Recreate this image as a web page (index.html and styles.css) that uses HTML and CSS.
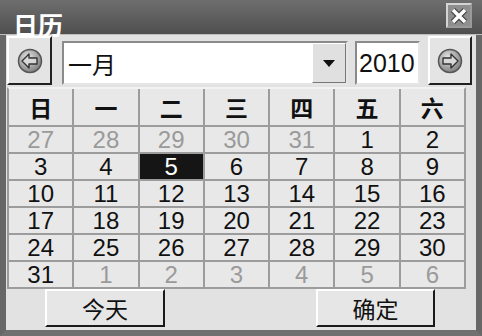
FILE: index.html
```html
<!DOCTYPE html>
<html lang="zh">

<head>
    <meta charset="UTF-8">
    <meta name="viewport" content="width=device-width, initial-scale=1.0">
    <title>日历</title>
    <link rel="stylesheet" href="styles.css">
</head>

<body>
    <div class="window">
        <div class="titlebar">
            <span class="title">日历</span>
            <button class="close">
                <svg width="18" height="18" viewBox="0 0 18 18">
                    <path d="M3 3 L15 15 M15 3 L3 15" stroke="#444" stroke-width="6" />
                    <path d="M3 3 L15 15 M15 3 L3 15" stroke="#fff" stroke-width="3.5" />
                </svg>
            </button>
        </div>

        <div class="toolbar">
            <button class="nav-btn">
                <svg width="26" height="26" viewBox="0 0 26 26">
                    <circle cx="13" cy="13" r="11.5" fill="url(#ball)" stroke="#555" stroke-width="1.5" />
                    <polygon points="5,13 12,6 12,10 20,10 20,16 12,16 12,20" fill="#d8d8d8" stroke="#333" stroke-width="1.4" stroke-linejoin="round" />
                    <defs>
                        <radialGradient id="ball" cx="40%" cy="35%" r="70%">
                            <stop offset="0" stop-color="#e6e6e6" />
                            <stop offset="1" stop-color="#7a7a7a" />
                        </radialGradient>
                    </defs>
                </svg>
            </button>
            <div class="combo">
                <span class="combo-text">一月</span>
                <span class="combo-drop">
                    <svg width="12" height="7" viewBox="0 0 12 7">
                        <polygon points="0,0 12,0 6,7" fill="#111" />
                    </svg>
                </span>
            </div>
            <div class="year">2010</div>
            <button class="nav-btn">
                <svg width="26" height="26" viewBox="0 0 26 26">
                    <circle cx="13" cy="13" r="11.5" fill="url(#ball2)" stroke="#555" stroke-width="1.5" />
                    <polygon points="21,13 14,6 14,10 6,10 6,16 14,16 14,20" fill="#d8d8d8" stroke="#333" stroke-width="1.4" stroke-linejoin="round" />
                    <defs>
                        <radialGradient id="ball2" cx="40%" cy="35%" r="70%">
                            <stop offset="0" stop-color="#e6e6e6" />
                            <stop offset="1" stop-color="#7a7a7a" />
                        </radialGradient>
                    </defs>
                </svg>
            </button>
        </div>

        <div class="calendar">
            <div class="head">日</div>
            <div class="head">一</div>
            <div class="head">二</div>
            <div class="head">三</div>
            <div class="head">四</div>
            <div class="head">五</div>
            <div class="head">六</div>

            <div class="day other">27</div>
            <div class="day other">28</div>
            <div class="day other">29</div>
            <div class="day other">30</div>
            <div class="day other">31</div>
            <div class="day">1</div>
            <div class="day">2</div>

            <div class="day">3</div>
            <div class="day">4</div>
            <div class="day selected">5</div>
            <div class="day">6</div>
            <div class="day">7</div>
            <div class="day">8</div>
            <div class="day">9</div>

            <div class="day">10</div>
            <div class="day">11</div>
            <div class="day">12</div>
            <div class="day">13</div>
            <div class="day">14</div>
            <div class="day">15</div>
            <div class="day">16</div>

            <div class="day">17</div>
            <div class="day">18</div>
            <div class="day">19</div>
            <div class="day">20</div>
            <div class="day">21</div>
            <div class="day">22</div>
            <div class="day">23</div>

            <div class="day">24</div>
            <div class="day">25</div>
            <div class="day">26</div>
            <div class="day">27</div>
            <div class="day">28</div>
            <div class="day">29</div>
            <div class="day">30</div>

            <div class="day">31</div>
            <div class="day other">1</div>
            <div class="day other">2</div>
            <div class="day other">3</div>
            <div class="day other">4</div>
            <div class="day other">5</div>
            <div class="day other">6</div>
        </div>

        <div class="footer">
            <button class="btn">今天</button>
            <button class="btn">确定</button>
        </div>
    </div>
</body>

</html>
```

FILE: styles.css
```css
body {
    margin: 0;
    background: #fff;
}

.window {
    width: 482px;
    height: 336px;
    box-sizing: border-box;
    background: #e2e2e2;
    border-left: 6px solid #676767;
    border-right: 6px solid #676767;
    border-bottom: 6px solid #707070;
    font-family: "Liberation Sans", "Noto Sans CJK SC", sans-serif;
    color: #111;
}

/* 타이틀바 */
.titlebar {
    height: 35px;
    display: flex;
    justify-content: space-between;
    align-items: flex-start;
    background: linear-gradient(#6e6e6e, #4f4f4f);
    margin: 0 -6px;
    padding: 0 10px 0 13px;
    box-sizing: border-box;
    border-bottom: 1px solid #bdbdbd;
}

.title {
    align-self: flex-end;
    font-family: "Noto Sans CJK SC", sans-serif;
    font-size: 25px;
    font-weight: 700;
    line-height: 25px;
    color: #fff;
    margin-bottom: -3px;
}

.close {
    margin-top: 3px;
    width: 26px;
    height: 25px;
    padding: 0;
    display: flex;
    align-items: center;
    justify-content: center;
    background: #8e8e8e;
    border: 2px solid #d4d4d4;
    border-right-color: #9a9a9a;
    border-bottom-color: #9a9a9a;
}

/* 툴바 */
.toolbar {
    height: 52px;
    display: flex;
    align-items: flex-end;
    padding: 0 0 2px 1px;
    box-sizing: border-box;
}

.nav-btn {
    height: 49px;
    width: 45px;
    padding: 0;
    display: flex;
    align-items: center;
    justify-content: center;
    background: #e4e4e4;
    border: 2px solid #fff;
    border-right-color: #222;
    border-bottom-color: #222;
}

.nav-btn:last-child {
    width: 44px;
    margin-left: 8px;
}

.combo {
    margin-left: 10px;
    width: 286px;
    height: 44px;
    box-sizing: border-box;
    display: flex;
    background: #fff;
    border: 2px solid #8a8a8a;
    border-right-color: #e6e6e6;
    border-bottom-color: #e6e6e6;
}

.combo-text {
    flex: 1;
    display: flex;
    align-items: center;
    padding-left: 4px;
    font-family: "Noto Sans CJK SC", sans-serif;
    font-size: 24px;
}

.combo-drop {
    width: 32px;
    display: flex;
    align-items: center;
    justify-content: center;
    background: #e0e0e0;
    border: 1px solid #fff;
    border-right-color: #777;
    border-bottom-color: #777;
}

.year {
    margin-left: 7px;
    width: 65px;
    height: 44px;
    box-sizing: border-box;
    display: flex;
    align-items: center;
    padding-left: 2px;
    background: #fff;
    border: 2px solid #8a8a8a;
    border-right-color: #e6e6e6;
    border-bottom-color: #e6e6e6;
    font-size: 25px;
}

/* 달력 */
.calendar {
    margin-left: 1px;
    width: 459px;
    box-sizing: border-box;
    display: grid;
    grid-template-columns: repeat(7, 1fr);
    grid-template-rows: 36px repeat(6, 25px);
    gap: 2px;
    background: #9c9c9c;
    border: 2px solid #9c9c9c;
    border-top-color: #f2f2f2;
}

.head,
.day {
    background: #e8e8e8;
    display: flex;
    align-items: center;
    justify-content: center;
}

.head {
    font-family: "Noto Sans CJK SC", sans-serif;
    font-size: 23px;
    font-weight: 700;
}

.day {
    font-size: 24px;
    line-height: 24px;
    padding-top: 1px;
    box-sizing: border-box;
}

.day.other {
    color: #9a9a9a;
}

.day.selected {
    background: #151515;
    color: #fff;
}

/* 버튼 */
.footer {
    height: 40px;
    display: flex;
    align-items: flex-start;
    padding-left: 39px;
    gap: 151px;
}

.btn {
    width: 120px;
    height: 38px;
    padding: 0;
    background: #e6e6e6;
    border: 2px solid #fff;
    border-right-color: #1a1a1a;
    border-bottom-color: #1a1a1a;
    font-family: "Noto Sans CJK SC", sans-serif;
    font-size: 23px;
    color: #111;
}

.btn:last-child {
    width: 119px;
}
```
